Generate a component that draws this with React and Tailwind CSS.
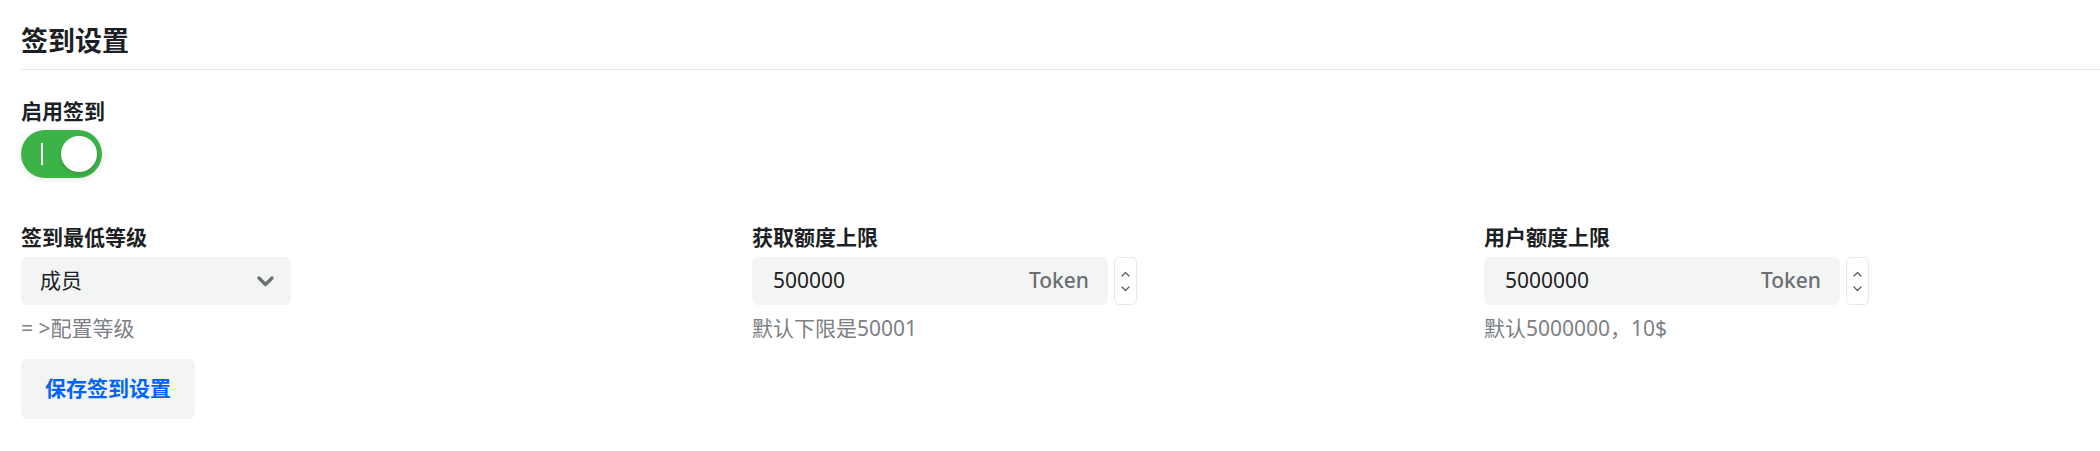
import React from 'react';

const font = { fontFamily: '"Noto Sans", "Noto Sans CJK SC", sans-serif' };

const ChevronDown = () => (
  <svg width="17" height="11" viewBox="0 0 17 11" fill="none">
    <path d="M2 2l6.5 6.5L15 2" stroke="#6b6e72" strokeWidth="3.2" strokeLinecap="round" strokeLinejoin="round" />
  </svg>
);

const Stepper = () => (
  <div className="flex h-[48px] w-[23px] flex-col items-center justify-center gap-[9px] rounded-[5px] border border-[#e8e9ea] bg-white">
    <svg width="9" height="6" viewBox="0 0 9 6" fill="none">
      <path d="M1 5l3.5-3.5L8 5" stroke="#55585c" strokeWidth="1.2" strokeLinecap="round" strokeLinejoin="round" />
    </svg>
    <svg width="9" height="6" viewBox="0 0 9 6" fill="none">
      <path d="M1 1l3.5 3.5L8 1" stroke="#55585c" strokeWidth="1.2" strokeLinecap="round" strokeLinejoin="round" />
    </svg>
  </div>
);

const Label = ({ children }) => (
  <div className="mb-[5px] text-[21px] font-bold leading-[30px] text-[#1c1f23]">{children}</div>
);

const Helper = ({ children }) => (
  <div className="mt-[8px] text-[21px] leading-[30px] text-[#7d8084]">{children}</div>
);

const TokenField = ({ label, value, helper }) => (
  <div className="w-[732px] shrink-0">
    <Label>{label}</Label>
    <div className="flex items-center gap-[6px]">
      <div className="flex h-[48px] w-[356px] items-center justify-between rounded-[6px] bg-[#f3f4f4] pl-[21px] pr-[19px]">
        <span className="text-[21px] text-[#1c1f23]">{value}</span>
        <span className="text-[21px] font-medium text-[#6b6e72]">Token</span>
      </div>
      <Stepper />
    </div>
    <Helper>{helper}</Helper>
  </div>
);

export default function App() {
  return (
    <div className="h-[451px] w-[2100px] overflow-hidden bg-white" style={font}>
      <div className="pl-[21px] pt-[23px]">
        <div className="border-b border-[#e8e9ea] pb-[10px] text-[27px] font-bold leading-[36px] text-[#1c1f23]">
          签到设置
        </div>

        <div className="mt-[26px]">
          <div className="text-[21px] font-bold leading-[30px] text-[#1c1f23]">启用签到</div>
          <div className="mt-[4px] flex h-[48px] w-[81px] items-center justify-between rounded-full bg-[#3bb346] pl-[20px] pr-[5px] shadow-[0_2px_6px_rgba(0,0,0,0.08)]">
            <span className="h-[22px] w-[2px] bg-white" />
            <span className="h-[36px] w-[36px] rounded-full bg-white shadow-[0_2px_4px_rgba(0,0,0,0.15)]" />
          </div>
        </div>

        <div className="mt-[44px] flex">
          <div className="w-[731px] shrink-0">
            <Label>签到最低等级</Label>
            <div className="flex h-[48px] w-[270px] items-center justify-between rounded-[6px] bg-[#f3f4f4] pl-[19px] pr-[17px]">
              <span className="text-[21px] text-[#1c1f23]">成员</span>
              <ChevronDown />
            </div>
            <Helper>= &gt;配置等级</Helper>
            <button className="mt-[16px] h-[60px] rounded-[6px] bg-[#f3f4f4] px-[24px] text-[21px] font-bold text-[#0064fa]">
              保存签到设置
            </button>
          </div>
          <TokenField label="获取额度上限" value="500000" helper="默认下限是50001" />
          <TokenField label="用户额度上限" value="5000000" helper="默认5000000，10$" />
        </div>
      </div>
    </div>
  );
}
